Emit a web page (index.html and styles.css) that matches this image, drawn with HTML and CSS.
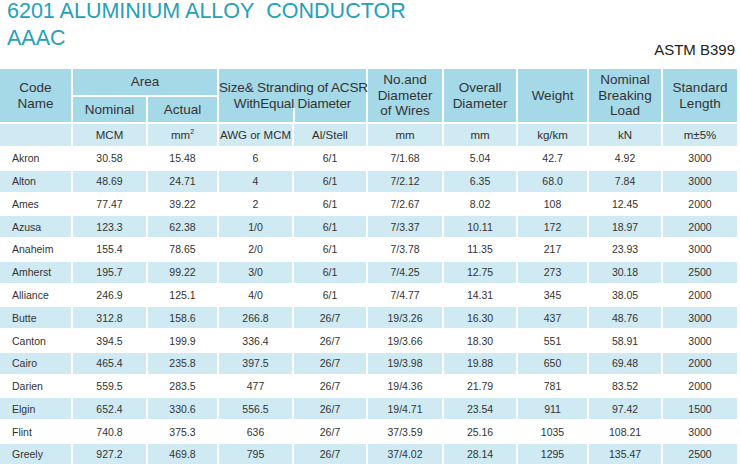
FILE: index.html
```html
<!DOCTYPE html>
<html lang="en">
<head>
<meta charset="utf-8">
<title>6201 Aluminium Alloy Conductor AAAC</title>
<link rel="stylesheet" href="styles.css">
</head>
<body>
<header class="top">
  <h1 class="title">6201 ALUMINIUM ALLOY&nbsp; CONDUCTOR<br>AAAC</h1>
  <div class="std">ASTM B399</div>
</header>
<table class="spec">
  <colgroup>
    <col class="c1"><col class="c2"><col class="c3"><col class="c4"><col class="c5">
    <col class="c6"><col class="c7"><col class="c8"><col class="c9"><col class="c10">
  </colgroup>
  <thead>
    <tr class="h1">
      <th rowspan="2" class="hd">Code<br>Name</th>
      <th colspan="2" class="hd">Area</th>
      <th colspan="2" rowspan="2" class="hd split">Size&amp; Stranding of ACSR<br>WithEqual Diameter</th>
      <th rowspan="2" class="hd">No.and<br>Diameter<br>of Wires</th>
      <th rowspan="2" class="hd">Overall<br>Diameter</th>
      <th rowspan="2" class="hd">Weight</th>
      <th rowspan="2" class="hd">Nominal<br>Breaking<br>Load</th>
      <th rowspan="2" class="hd">Standard<br>Length</th>
    </tr>
    <tr class="h2">
      <th class="hd">Nominal</th>
      <th class="hd">Actual</th>
    </tr>
    <tr class="units">
      <th class="un"></th>
      <th class="un">MCM</th>
      <th class="un">mm<sup>2</sup></th>
      <th class="un">AWG or MCM</th>
      <th class="un">Al/Stell</th>
      <th class="un">mm</th>
      <th class="un">mm</th>
      <th class="un">kg/km</th>
      <th class="un">kN</th>
      <th class="un">m±5%</th>
    </tr>
  </thead>
  <tbody>
    <tr class="row"><td class="name">Akron</td><td>30.58</td><td>15.48</td><td>6</td><td>6/1</td><td>7/1.68</td><td>5.04</td><td>42.7</td><td>4.92</td><td>3000</td></tr>
    <tr class="row alt"><td class="name">Alton</td><td>48.69</td><td>24.71</td><td>4</td><td>6/1</td><td>7/2.12</td><td>6.35</td><td>68.0</td><td>7.84</td><td>3000</td></tr>
    <tr class="row"><td class="name">Ames</td><td>77.47</td><td>39.22</td><td>2</td><td>6/1</td><td>7/2.67</td><td>8.02</td><td>108</td><td>12.45</td><td>2000</td></tr>
    <tr class="row alt"><td class="name">Azusa</td><td>123.3</td><td>62.38</td><td>1/0</td><td>6/1</td><td>7/3.37</td><td>10.11</td><td>172</td><td>18.97</td><td>2000</td></tr>
    <tr class="row"><td class="name">Anaheim</td><td>155.4</td><td>78.65</td><td>2/0</td><td>6/1</td><td>7/3.78</td><td>11.35</td><td>217</td><td>23.93</td><td>3000</td></tr>
    <tr class="row alt"><td class="name">Amherst</td><td>195.7</td><td>99.22</td><td>3/0</td><td>6/1</td><td>7/4.25</td><td>12.75</td><td>273</td><td>30.18</td><td>2500</td></tr>
    <tr class="row"><td class="name">Alliance</td><td>246.9</td><td>125.1</td><td>4/0</td><td>6/1</td><td>7/4.77</td><td>14.31</td><td>345</td><td>38.05</td><td>2000</td></tr>
    <tr class="row alt"><td class="name">Butte</td><td>312.8</td><td>158.6</td><td>266.8</td><td>26/7</td><td>19/3.26</td><td>16.30</td><td>437</td><td>48.76</td><td>3000</td></tr>
    <tr class="row"><td class="name">Canton</td><td>394.5</td><td>199.9</td><td>336.4</td><td>26/7</td><td>19/3.66</td><td>18.30</td><td>551</td><td>58.91</td><td>3000</td></tr>
    <tr class="row alt"><td class="name">Cairo</td><td>465.4</td><td>235.8</td><td>397.5</td><td>26/7</td><td>19/3.98</td><td>19.88</td><td>650</td><td>69.48</td><td>2000</td></tr>
    <tr class="row"><td class="name">Darien</td><td>559.5</td><td>283.5</td><td>477</td><td>26/7</td><td>19/4.36</td><td>21.79</td><td>781</td><td>83.52</td><td>2000</td></tr>
    <tr class="row alt"><td class="name">Elgin</td><td>652.4</td><td>330.6</td><td>556.5</td><td>26/7</td><td>19/4.71</td><td>23.54</td><td>911</td><td>97.42</td><td>1500</td></tr>
    <tr class="row"><td class="name">Flint</td><td>740.8</td><td>375.3</td><td>636</td><td>26/7</td><td>37/3.59</td><td>25.16</td><td>1035</td><td>108.21</td><td>3000</td></tr>
    <tr class="row alt"><td class="name">Greely</td><td>927.2</td><td>469.8</td><td>795</td><td>26/7</td><td>37/4.02</td><td>28.14</td><td>1295</td><td>135.47</td><td>2500</td></tr>
  </tbody>
</table>
</body>
</html>
```
FILE: styles.css
```css
html, body {
  margin: 0;
  padding: 0;
  background: #ffffff;
  overflow: hidden;
}
body {
  font-family: "Liberation Sans", Arial, Helvetica, sans-serif;
  color: #2f2f2f;
}
.top {
  height: 67px;
  box-sizing: border-box;
  display: flex;
  justify-content: space-between;
  align-items: flex-end;
  padding: 0 5px 9px 7px;
}
.title {
  align-self: flex-start;
  margin: 0;
  font-weight: normal;
  font-size: 21.5px;
  line-height: 27px;
  color: #25a0b8;
  margin-top: -2px;
  white-space: nowrap;
}
.std {
  font-size: 15px;
  line-height: 17px;
  color: #222222;
}
.spec {
  table-layout: fixed;
  width: 741px;
  margin-left: -2px;
  border-collapse: separate;
  border-spacing: 2px;
}
.c1 { width: 71px; }
.c2 { width: 73px; }
.c3 { width: 69px; }
.c4 { width: 73px; }
.c5 { width: 72px; }
.c6 { width: 74px; }
.c7 { width: 72px; }
.c8 { width: 69px; }
.c9 { width: 72px; }
.c10 { width: 74px; }
.spec th, .spec td {
  padding: 0;
  text-align: center;
  vertical-align: middle;
  white-space: nowrap;
}
.hd {
  background: #a6d9e8;
  font-weight: normal;
  font-size: 13.5px;
  line-height: 15.5px;
  color: #333333;
}
.h1 { height: 26px; }
.h2 { height: 25px; }
.split {
  position: relative;
  letter-spacing: -0.15px;
}
.split::after {
  content: "";
  position: absolute;
  left: 74px;
  bottom: 0;
  width: 2px;
  height: 14px;
  background: #ffffff;
}
.units { height: 22px; }
.un {
  background: #cfeaf3;
  font-weight: normal;
  font-size: 11.5px;
  color: #2f2f2f;
}
.un sup {
  font-size: 7px;
  vertical-align: 5px;
  line-height: 0;
}
.row td {
  height: 20.77px;
  font-size: 10.5px;
  line-height: 12px;
  color: #333333;
}
.row.alt td {
  background: #cfeaf3;
}
.spec td.name {
  text-align: left;
  padding-left: 12px;
}
```
